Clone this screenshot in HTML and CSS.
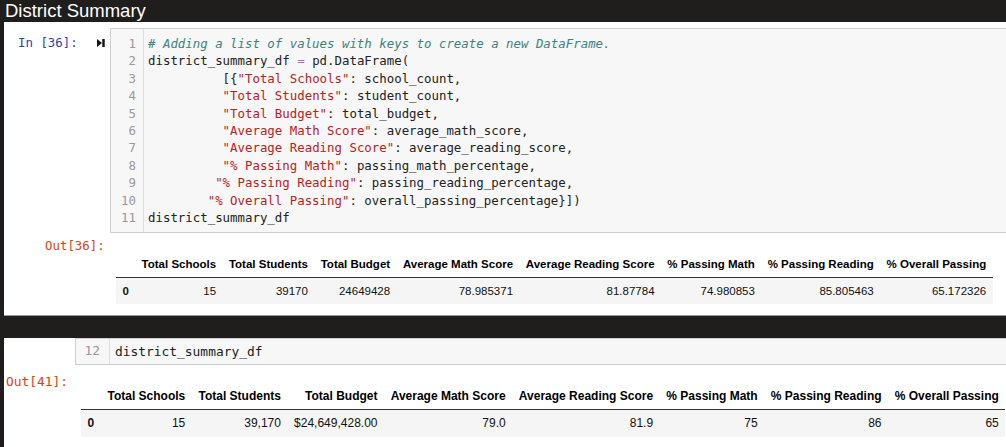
FILE: index.html
```html
<!DOCTYPE html>
<html>
<head>
<meta charset="utf-8">
<link rel="stylesheet" href="styles.css">
</head>
<body>
<div class="title">District Summary</div>
<div class="panel top">
  <div class="cell-in">
    <div class="prompt-in">
      <span class="in-label">In&nbsp;[36]:</span>
      <svg class="run" width="8" height="8" viewBox="0 0 8 8"><polygon points="0,0 5,4 0,8" fill="#111"/><rect x="5.3" y="0" width="2.4" height="8" fill="#111"/></svg>
    </div>
    <div class="code">
      <div class="gutter"><div>1</div><div>2</div><div>3</div><div>4</div><div>5</div><div>6</div><div>7</div><div>8</div><div>9</div><div>10</div><div>11</div></div>
<pre class="src"><span class="cm"># Adding a list of values with keys to create a new DataFrame.</span>
district_summary_df <span class="op">=</span> pd.DataFrame(
          [{<span class="st">"Total Schools"</span>: school_count,
          <span class="st">"Total Students"</span>: student_count,
          <span class="st">"Total Budget"</span>: total_budget,
          <span class="st">"Average Math Score"</span>: average_math_score,
          <span class="st">"Average Reading Score"</span>: average_reading_score,
          <span class="st">"% Passing Math"</span>: passing_math_percentage,
         <span class="st">"% Passing Reading"</span>: passing_reading_percentage,
        <span class="st">"% Overall Passing"</span>: overall_passing_percentage}])
district_summary_df</pre>
    </div>
  </div>
  <div class="cell-out">
    <div class="prompt-out">Out[36]:</div>
    <table class="df df-top">
      <thead>
        <tr><th></th><th>Total Schools</th><th>Total Students</th><th>Total Budget</th><th>Average Math Score</th><th>Average Reading Score</th><th>% Passing Math</th><th>% Passing Reading</th><th>% Overall Passing</th></tr>
      </thead>
      <tbody>
        <tr><th>0</th><td>15</td><td>39170</td><td>24649428</td><td>78.985371</td><td>81.87784</td><td>74.980853</td><td>85.805463</td><td>65.172326</td></tr>
      </tbody>
    </table>
  </div>
</div>
<div class="panel bottom">
  <div class="code code2">
    <div class="gutter2">12</div>
    <pre class="src2">district_summary_df</pre>
  </div>
  <div class="cell-out2">
    <div class="prompt-out2">Out[41]:</div>
    <table class="df df-bottom">
      <thead>
        <tr><th></th><th>Total Schools</th><th>Total Students</th><th>Total Budget</th><th>Average Math Score</th><th>Average Reading Score</th><th>% Passing Math</th><th>% Passing Reading</th><th>% Overall Passing</th></tr>
      </thead>
      <tbody>
        <tr><th>0</th><td>15</td><td>39,170</td><td>$24,649,428.00</td><td>79.0</td><td>81.9</td><td>75</td><td>86</td><td>65</td></tr>
      </tbody>
    </table>
  </div>
</div>
</body>
</html>
```
FILE: styles.css
```css
html, body {
  margin: 0;
  padding: 0;
}
body {
  width: 1006px;
  height: 447px;
  overflow: hidden;
  background: #1f1e1c;
  font-family: "Liberation Sans", Arial, sans-serif;
}
.title {
  height: 22px;
  line-height: 22px;
  padding-left: 5px;
  color: #fff;
  font-size: 18.5px;
}
.panel {
  margin-left: 4px;
  background: #fff;
}
.panel.top {
  padding-top: 6px;
  padding-bottom: 11px;
  border-bottom: 1px solid #9a9a9a;
  margin-bottom: 22px;
}
.panel.bottom {
  height: 110px;
}
.cell-in {
  display: flex;
}
.prompt-in {
  width: 106px;
  flex: none;
  display: flex;
  align-items: flex-start;
  padding-top: 6px;
  box-sizing: border-box;
}
.in-label {
  font-family: "DejaVu Sans Mono", monospace;
  font-size: 12.4px;
  line-height: 17.4px;
  color: #303f9f;
  padding-left: 14px;
  width: 79px;
}
.run {
  margin-top: 5px;
}
.code {
  flex: 1;
  display: flex;
  background: #f7f7f7;
  border: 1px solid #cfcfcf;
  border-right: none;
}
.gutter {
  flex: none;
  border-right: 1px solid #dedede;
  padding: 6px 7px 6px 0;
  box-sizing: border-box;
  width: 33px;
  text-align: right;
  font-family: "DejaVu Sans Mono", monospace;
  font-size: 12.4px;
  line-height: 17.4px;
  color: #999;
}
.src {
  margin: 0;
  padding: 6px 0 6px 4px;
  font-family: "DejaVu Sans Mono", monospace;
  font-size: 12.4px;
  line-height: 17.4px;
  color: #222;
}
.cm { color: #408080; font-style: italic; }
.st { color: #ba2121; }
.op { color: #9a70c0; }
.cell-out {
  display: flex;
  padding-top: 4px;
}
.prompt-out {
  width: 106px;
  flex: none;
  box-sizing: border-box;
  padding-left: 41px;
  font-family: "DejaVu Sans Mono", monospace;
  font-size: 12.4px;
  line-height: 17px;
  color: #d84315;
}
.df {
  border-collapse: collapse;
  color: #111;
  margin-left: 6px;
}
.df th, .df td {
  white-space: nowrap;
  text-align: right;
  vertical-align: middle;
}
.df thead th {
  font-weight: bold;
  color: #000;
  border-bottom: 1px solid #333;
}
.df tbody tr {
  background: #f5f5f5;
}
.df tbody th {
  text-align: left;
  font-weight: bold;
}
.df-top {
  margin-top: 14px;
  font-size: 11.5px;
}
.df-top th, .df-top td {
  padding: 0 6.4px;
  height: 26px;
  line-height: 26px;
}
.code2 {
  margin-left: 71px;
  height: 27px;
  box-sizing: border-box;
  align-items: center;
}
.gutter2 {
  width: 34px;
  height: 100%;
  box-sizing: border-box;
  border-right: 1px solid #dedede;
  padding-right: 9px;
  text-align: right;
  font-family: "DejaVu Sans Mono", monospace;
  font-size: 12.9px;
  line-height: 24px;
  color: #999;
}
.src2 {
  margin: 0;
  padding-left: 5px;
  font-family: "DejaVu Sans Mono", monospace;
  font-size: 12.9px;
  line-height: 24px;
  color: #222;
}
.cell-out2 {
  display: flex;
  padding-top: 8px;
}
.prompt-out2 {
  width: 74px;
  flex: none;
  padding-left: 2px;
  box-sizing: border-box;
  font-family: "DejaVu Sans Mono", monospace;
  font-size: 12.9px;
  line-height: 18px;
  color: #d84315;
}
.df-bottom {
  margin-top: 10px;
  margin-left: 3px;
  font-size: 12px;
}
.df-bottom th, .df-bottom td {
  padding: 0 6.6px;
}
.df-bottom thead th {
  height: 26px;
  line-height: 26px;
}
.df-bottom tbody th, .df-bottom tbody td {
  height: 27px;
  line-height: 27px;
}
```
